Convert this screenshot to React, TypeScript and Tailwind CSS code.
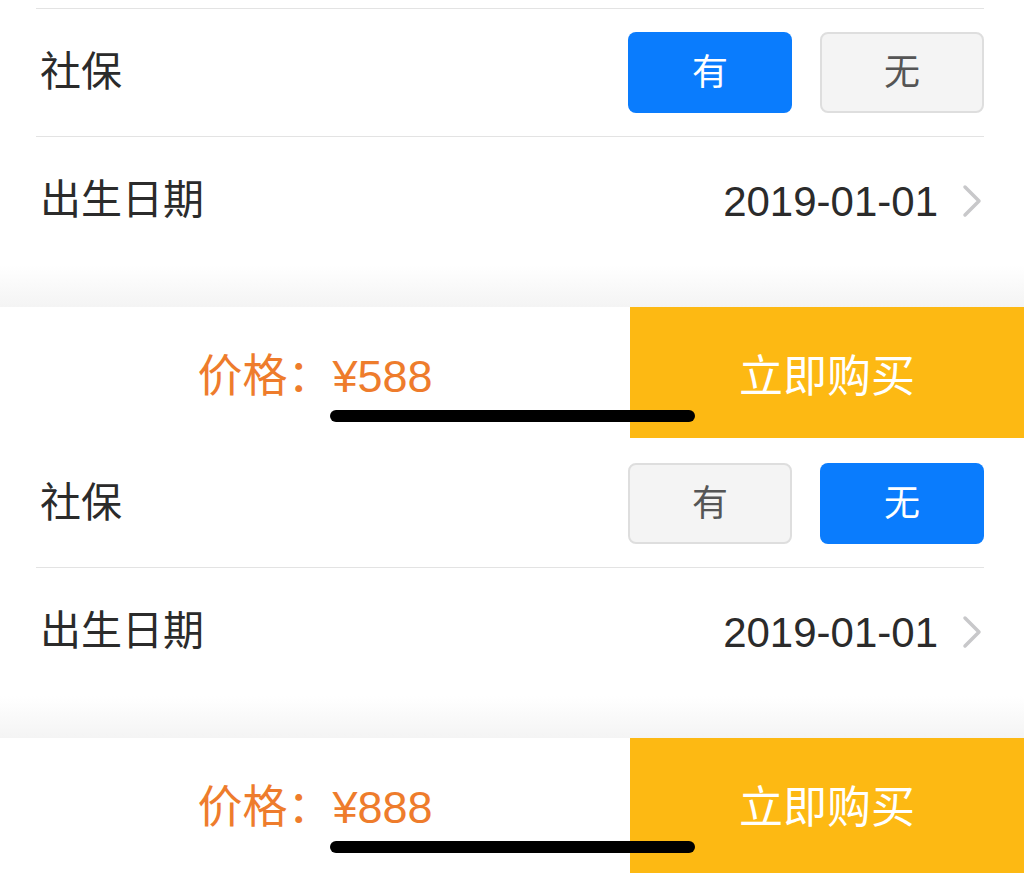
import { useState } from 'react';

const font = { fontFamily: '"Liberation Sans", "Noto Sans CJK SC", sans-serif' };

const Chevron = () => (
  <svg width="24" height="36" viewBox="0 0 24 36" className="ml-[22px]">
    <polyline points="5,4 19,18 5,32" fill="none" stroke="#c8c8ca" strokeWidth="3.5" strokeLinecap="round" strokeLinejoin="round" />
  </svg>
);

const Choice = ({ label, active, onClick }: { label: string; active: boolean; onClick: () => void }) => (
  <button
    onClick={onClick}
    className={
      active
        ? 'w-[164px] h-[81px] rounded-[8px] bg-[#0a7cfd] text-white text-[36px]'
        : 'w-[164px] h-[81px] rounded-[8px] bg-[#f4f4f4] border-2 border-[#dedede] text-[#555] text-[36px]'
    }
  >
    {label}
  </button>
);

const Panel = ({ first, initial, price }: { first: boolean; initial: boolean; price: number }) => {
  const [insured, setInsured] = useState(initial);

  return (
    <div className="bg-white">
      <div className={first ? 'h-[8px]' : 'h-px'} />
      <div className={first ? 'h-px bg-[#e3e3e3] ml-[36px] mr-[40px]' : 'h-px'} />
      <div className="h-[127px] flex items-center justify-between pl-[40px] pr-[40px]">
        <span className="text-[41px] text-[#2b2b2b]">社保</span>
        <div className="flex gap-[28px]">
          <Choice label="有" active={insured} onClick={() => setInsured(true)} />
          <Choice label="无" active={!insured} onClick={() => setInsured(false)} />
        </div>
      </div>
      <div className="h-px bg-[#e3e3e3] ml-[36px] mr-[40px]" />
      <div className="h-[128px] flex items-center justify-between pl-[40px] pr-[40px]">
        <span className="text-[41px] text-[#2b2b2b]">出生日期</span>
        <div className="flex items-center">
          <span className="text-[42px] text-[#2b2b2b]">2019-01-01</span>
          <Chevron />
        </div>
      </div>
      <div className="h-[42px] bg-gradient-to-b from-white to-[#f4f4f4]" />
      <div className={first ? 'relative h-[131px] flex' : 'relative h-[140px] flex'}>
        <div className="w-[630px] h-[131px] pt-[8px] flex items-center justify-center text-[45px] text-[#ee7c2c]">
          价格：¥{price}
        </div>
        <div className="flex-1 bg-[#fdb913] text-white text-[44px]">
          <div className="h-[131px] pt-[8px] flex items-center justify-center">立即购买</div>
        </div>
        <div className="absolute left-[330px] top-[103px] w-[365px] h-[12px] rounded-full bg-black" />
      </div>
    </div>
  );
};

export default function App() {
  return (
    <div className="w-[1024px] h-[873px] overflow-hidden bg-white" style={font}>
      <Panel first initial={true} price={588} />
      <Panel first={false} initial={false} price={888} />
    </div>
  );
}
